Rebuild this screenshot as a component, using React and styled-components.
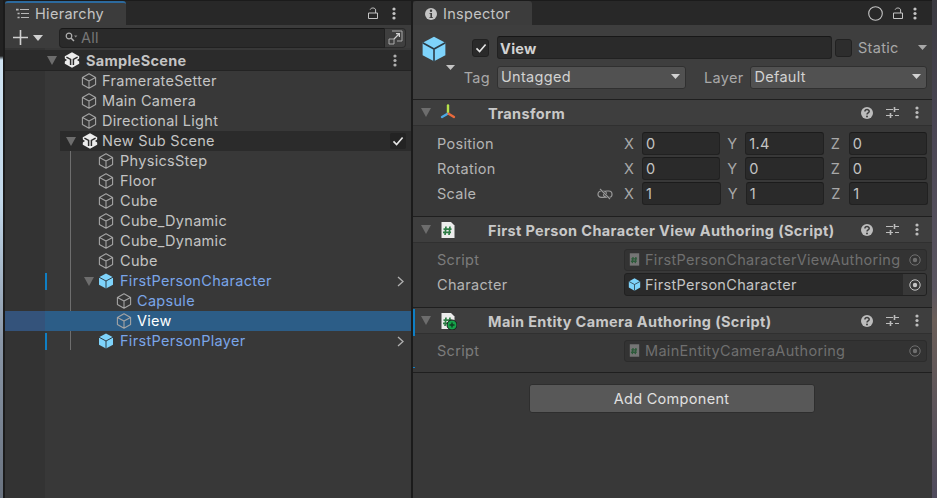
import React from "react";
import styled, { createGlobalStyle } from "styled-components";

const Global = createGlobalStyle`
  html, body { margin: 0; padding: 0; background: #1b1b1b; }
  * { box-sizing: border-box; }
`;

const Page = styled.div`
  width: 937px; height: 498px; overflow: hidden; display: flex; background: #1b1b1b;
  font-family: Inter, "Noto Sans", sans-serif; font-size: 14.5px; letter-spacing: .3px; color: #c4c4c4;
`;
const LeftEdge = styled.div`
  width: 3px; flex: none;
  background: linear-gradient(180deg, #222 0, #222 56px, #cfe3f2 60px, #c2d8ea 200px, #8a97a8 340px, #69727f 498px);
`;
const RightEdge = styled.div`
  width: 5px; flex: none;
  background: linear-gradient(180deg, #3b3a40 0, #4a4654 130px, #5a5560 290px, #6a5e58 320px, #4f4b5c 498px);
`;
const Panel = styled.section`
  display: flex; flex-direction: column; flex: none; width: ${p => p.$w}px; margin-left: ${p => p.$ml}px; background: #383838; height: 498px;
`;
const TabBar = styled.div`
  height: 25px; flex: none; display: flex; align-items: stretch; background: #282828; border-top: 1px solid #1b1b1b; padding-right: ${p => p.$pr}px;
`;
const Tab = styled.div`
  width: ${p => p.$w}px; display: flex; align-items: center; gap: 6px; padding-left: ${p => p.$pl}px; padding-top: ${p => (p.$focus ? 0 : 1)}px; padding-bottom: ${p => (p.$focus ? 1 : 0)}px;
  background: #3c3c3c; color: #c4c4c4; border-top: ${p => (p.$focus ? "2px solid #2c6a9e" : "none")}; border-radius: 3px 3px 0 0;
`;
const TabActions = styled.div`
  margin-left: auto; display: flex; align-items: center; gap: ${p => p.$gap}px; color: #c4c4c4;
`;
const Toolbar = styled.div`
  height: 23px; flex: none; background: #3c3c3c; display: flex; align-items: center; padding: 2px 5px 0 8px; color: #d0d0d0;
`;
const PlusButton = styled.div`
  width: 46px; flex: none; display: flex; align-items: center; gap: 5px;
`;
const SearchBox = styled.div`
  flex: 1; height: 20px; display: flex; align-items: center; gap: 3px; padding-left: 5px; background: #2a2a2a; border: 1px solid #212121; border-top-color: #171717; border-radius: 4px 0 0 4px; color: #777;
`;
const ExpandButton = styled.div`
  width: 21px; height: 20px; flex: none; display: flex; align-items: center; justify-content: center; background: #3f3f3f; border: 1px solid #2a2a2a; border-left: none; border-radius: 0 4px 4px 0; color: #aaa;
`;
const Tree = styled.div`
  position: relative; flex: 1; padding-top: 2px;
  background: linear-gradient(90deg, #333 40px, #383838 40px);
`;
const TreeLine = styled.div`
  position: absolute; left: 65px; top: 103px; width: 1px; height: 199px; background: #6e6e6e;
`;
const Row = styled.div`
  position: relative; height: 20px; display: flex; align-items: center; padding-left: ${p => p.$indent}px; padding-right: 5px;
  color: ${p => (p.$selected ? "#fff" : p.$prefab ? "#7aa5e8" : "#c4c4c4")};
  background: ${p => (p.$selected ? "linear-gradient(90deg, #34537b 40px, #2c5d87 40px)" : "transparent")};
`;
const RowLabel = styled.span`
  margin-bottom: 2px;
`;
const SceneRow = styled(Row)`
  height: 21px; font-weight: 700; background: #2b2b2b; border-bottom: 1px solid #232323;
`;
const SceneLabel = styled.span`
  margin-top: 1px;
`;
const SubSceneRow = styled(Row)`
  margin-left: 55px; padding-left: 0; background: #2b2b2b;
`;
const ArrowSlot = styled.div`
  width: ${p => p.$w ?? 18}px; flex: none; display: flex; align-items: center; padding-left: ${p => p.$pl ?? 1}px; color: #6d6d6d;
`;
const IconSlot = styled.div`
  width: 16px; height: 16px; flex: none; margin-right: ${p => p.$mr ?? 5}px; display: flex;
`;
const Trailing = styled.div`
  margin-left: auto; padding-right: ${p => p.$pr ?? 0}px; display: flex; align-items: center; color: #b0b0b0;
`;
const ModifiedBar = styled.div`
  position: absolute; left: 40px; top: 2px; width: 2px; height: 17px; background: #0f7fc4;
`;
const CheckCell = styled.div`
  width: 16px; height: 16px; display: flex; align-items: center; justify-content: center; background: #232323; border-radius: 2px; color: #e6e6e6;
`;

const ObjectHeader = styled.div`
  height: 75px; flex: none; background: #3e3e3e; border-bottom: 1px solid #1f1f1f; padding: 11px 5px 0 0;
  display: grid; grid-template-columns: 84px 1fr; grid-template-rows: 23px 23px; row-gap: 7px;
`;
const HeaderLead = styled.div`
  position: relative; display: flex; align-items: flex-start; padding-left: 8px;
`;
const CaretBadge = styled.div`
  position: absolute; left: 33px; top: 29px; color: #c4c4c4; display: flex;
`;
const Toggle = styled.div`
  width: 17px; height: 18px; margin: 3px 0 0 25px; display: flex; align-items: center; justify-content: center; background: #2a2a2a; border: 1px solid #212121; border-radius: 3px; color: #e6e6e6;
`;
const NameRow = styled.div`
  display: flex; align-items: center;
`;
const NameField = styled.div`
  flex: 1; height: 23px; display: flex; align-items: center; padding: 2px 0 0 2px; background: #2a2a2a; border: 1px solid #212121; border-top-color: #171717; border-radius: 3px; color: #d2d2d2; font-weight: 700;
`;
const StaticBox = styled.div`
  width: 17px; height: 18px; margin-left: 3px; flex: none; background: #2d2d2d; border: 1px solid #212121; border-radius: 3px;
`;
const StaticLabel = styled.div`
  margin-left: 6px; width: 69px; flex: none; display: flex; align-items: center; justify-content: space-between; padding-right: 0; color: #a8a8a8;
`;
const TagLabel = styled.div`
  display: flex; justify-content: flex-end; align-items: center; padding-right: 7px; color: #a8a8a8;
`;
const TagRow = styled.div`
  display: flex; align-items: center;
`;
const Dropdown = styled.div`
  flex: ${p => (p.$w ? "none" : 1)}; width: ${p => p.$w}px; height: 23px; display: flex; align-items: center; justify-content: space-between; padding: 0 5px 2px 3px; background: #515151; border: 1px solid #303030; border-radius: 3px; color: #d2d2d2;
`;
const LayerLabel = styled.div`
  margin: 0 7px 0 18px; color: #a8a8a8;
`;
const Section = styled.div`
  position: relative; flex: none; border-bottom: 1px solid #1f1f1f;
`;
const SectionHeader = styled.div`
  height: 26px; display: flex; align-items: center; padding: 0 13px 0 8px; background: #3e3e3e; border-bottom: 1px solid #303030; color: #c8c8c8; font-weight: 700;
`;
const TitleIcon = styled.div`
  width: 18px; height: 18px; margin-right: 31px; display: flex; flex: none;
`;
const SectionTitle = styled.span`
  margin-top: 2px; letter-spacing: .37px;
`;
const SectionTools = styled.div`
  margin-left: auto; display: flex; align-items: center; gap: 13px; color: #bdbdbd;
`;
const SpacedDots = styled.div`
  margin-left: 3px; display: flex;
`;
const SectionBody = styled.div`
  padding: ${p => p.$top}px 5px ${p => p.$bottom}px 24px; display: flex; flex-direction: column; gap: ${p => p.$gap ?? 2}px;
`;
const PropRow = styled.div`
  height: 23px; display: grid; grid-template-columns: 187px 1fr; align-items: center; color: ${p => (p.$dim ? "#7c7c7c" : "#b4b4b4")};
`;
const LabelCell = styled.div`
  display: flex; align-items: center; justify-content: space-between; padding-right: 11px;
`;
const Vector = styled.div`
  display: grid; grid-template-columns: repeat(3, 1fr); column-gap: 7px; margin-right: ${p => (p.$shift ? -1 : 0)}px;
`;
const Axis = styled.div`
  display: grid; grid-template-columns: 18px 1fr; align-items: center; color: #a8a8a8;
`;
const NumField = styled.div`
  height: 23px; display: flex; align-items: center; padding-left: 3px; background: #2a2a2a; border: 1px solid #212121; border-top-color: #1b1b1b; border-radius: 3px; color: #c4c4c4;
`;
const ObjectField = styled.div`
  height: ${p => (p.$dim ? 22 : 23)}px; display: flex; align-items: center; padding-left: 3px; background: ${p => (p.$dim ? "#333333" : "#2a2a2a")}; border: 1px solid ${p => (p.$dim ? "#2c2c2c" : "#212121")}; border-radius: 3px; color: ${p => (p.$dim ? "#6f6f6f" : "#c4c4c4")}; overflow: hidden; white-space: nowrap;
`;
const FieldText = styled.span`
  flex: 1; min-width: 0; overflow: hidden; margin-left: 4px;
`;
const PickerCell = styled.div`
  width: 23px; align-self: stretch; flex: none; display: flex; align-items: center; justify-content: center; color: ${p => (p.$dim ? "#6f6f6f" : "#c4c4c4")}; background: ${p => (p.$dim ? "transparent" : "#383838")};
`;
const ChangedTick = styled.div`
  position: absolute; left: 0; top: ${p => p.$top}px; width: 2px; height: ${p => p.$h}px; background: #0f7fc4;
`;
const Footer = styled.div`
  display: flex; justify-content: center; padding: 11px 2px 0 0;
`;
const AddButton = styled.div`
  width: 286px; height: 29px; display: flex; align-items: center; justify-content: center; background: #585858; border: 1px solid #2e2e2e; border-radius: 3px; color: #e0e0e0;
`;

const Svg = ({ s = 16, h, children, vb }) => (
  <svg width={s} height={h ?? s} viewBox={vb ?? `0 0 ${s} ${h ?? s}`} fill="none" style={{ display: "block", flex: "none" }}>{children}</svg>
);
const Cube = () => (
  <Svg s={16} vb="0 0 16 16">
    <path d="M8 .8 14.6 4.4V11.6L8 15.2 1.4 11.6V4.4ZM1.4 4.4 8 8 14.6 4.4M8 8V15.2" stroke="#a4a4a4" strokeWidth="1.1" strokeLinejoin="round" />
  </Svg>
);
const BlueCube = ({ s = 16 }) => (
  <Svg s={s} vb="0 0 16 16">
    <path d="M8 .4 15 4.2V11.8L8 15.6 1 11.8V4.2Z" fill="#7ed3fb" />
    <path d="M1 4.2 8 8 15 4.2M8 8V15.6" stroke="#2d3c46" strokeWidth="1" />
  </Svg>
);
const UnityLogo = () => (
  <Svg s={16} vb="0 0 16 16">
    <path d="M8 .2 15.2 4.2V11.8L8 15.8 .8 11.8V4.2Z" fill="#ececec" />
    <path d="M2.4 5.2 6.6 7.4V13M13.6 5.2 9.4 7.4V13" stroke="#2b2b2b" strokeWidth="1.5" />
    <path d="M0 6 3 8 0 10ZM16 6 13 8 16 10Z" fill="#2b2b2b" />
  </Svg>
);
const Tri = ({ dir = "down", w = 10, h = 9 }) => (
  <Svg s={w} h={h}>
    <path d={dir === "down" ? `M0 0H${w}L${w / 2} ${h}Z` : `M0 0L${w} ${h / 2}L0 ${h}Z`} fill="currentColor" />
  </Svg>
);
const Dots = () => (
  <Svg s={4} h={13}>
    <circle cx="2" cy="2" r="1.6" fill="currentColor" /><circle cx="2" cy="6.5" r="1.6" fill="currentColor" /><circle cx="2" cy="11" r="1.6" fill="currentColor" />
  </Svg>
);
const Lock = () => (
  <Svg s={10} h={12}>
    <path d="M.5 6H9.5V11.5H.5Z" stroke="currentColor" strokeWidth="1" />
    <path d="M2.2 2.6C2.8.4 7.6.4 7.6 3V6" stroke="currentColor" strokeWidth="1" />
  </Svg>
);
const ListIcon = () => (
  <Svg s={13} h={11}>
    <path d="M4 1.5H13M5 5.5H13M5 9.5H13" stroke="#b8b8b8" strokeWidth="1" />
    <path d="M0 .7H2.6V2.4H0ZM1.5 4.7H3.6V6.3H1.5ZM1.5 8.7H3.6V10.3H1.5Z" fill="#b8b8b8" />
  </Svg>
);
const InfoIcon = () => (
  <Svg s={12}>
    <circle cx="6" cy="6" r="6" fill="#c4c4c4" />
    <circle cx="6" cy="2.8" r="1.2" fill="#3c3c3c" />
    <path d="M4.4 5H7V9.2H8V10H4.4V9.2H5.4V5.8H4.4Z" fill="#3c3c3c" />
  </Svg>
);
const Plus = () => (
  <Svg s={15}><path d="M7.5 0V15M0 7.5H15" stroke="currentColor" strokeWidth="1.6" /></Svg>
);
const SearchIcon = () => (
  <Svg s={13} h={11}>
    <circle cx="4" cy="4" r="2.8" stroke="#b0b0b0" strokeWidth="1.2" />
    <path d="M6 6 9 9" stroke="#b0b0b0" strokeWidth="1.5" /><path d="M9 3.4H12.4L10.7 5.6Z" fill="#8a8a8a" />
  </Svg>
);
const ExpandIcon = () => (
  <Svg s={15}>
    <path d="M4 1H14V11H9" stroke="currentColor" strokeWidth="1" />
    <path d="M1 9H6V14H1Z" stroke="currentColor" strokeWidth="1" />
    <path d="M6 9 11 4M8 3.6H11.4V7" stroke="#d0d0d0" strokeWidth="1.2" />
  </Svg>
);
const Check = ({ s = 12 }) => (
  <Svg s={s} vb="0 0 12 12"><path d="M1.5 6.4 4.6 9.6 10.6 2.4" stroke="currentColor" strokeWidth="1.6" /></Svg>
);
const Chevron = () => (
  <Svg s={7} h={11}><path d="M1 1 6 5.5 1 10" stroke="currentColor" strokeWidth="1.3" /></Svg>
);
const TransformIcon = () => (
  <Svg s={18}>
    <path d="M9 1.5V8.5" stroke="#b6e24a" strokeWidth="2.4" strokeLinecap="round" />
    <path d="M8.6 9.8 3 13" stroke="#4aa8e4" strokeWidth="2.4" strokeLinecap="round" />
    <path d="M9.6 9.8 15 13" stroke="#ea6a3c" strokeWidth="2.4" strokeLinecap="round" />
  </Svg>
);
const Hash = ({ stroke, sw = 1.4 }) => (
  <path d="M7 5.5 6 14M11 5.5 10 14M4.5 8.2H12.5M4 11.4H12" stroke={stroke} strokeWidth={sw} />
);
const ScriptIcon = ({ add }) => (
  <Svg s={18}>
    <path d="M2.5 1H12L15.5 4.5V17H2.5Z" fill="#ececec" />
    <Hash stroke="#2f7d46" sw={1.7} />
    {add && <>
      <circle cx="13" cy="13" r="5" fill="#16a34a" stroke="#1c1c1c" strokeWidth="1" />
      <path d="M13 10.5V15.5M10.5 13H15.5" stroke="#0e3d20" strokeWidth="1.4" />
    </>}
  </Svg>
);
const SmallScript = () => (
  <Svg s={13} vb="0 0 18 18">
    <path d="M2.5 .5H15.5V17.5H2.5Z" fill="#757575" />
    <Hash stroke="#2d5a3a" sw={1.9} />
  </Svg>
);
const HelpIcon = () => (
  <Svg s={12}>
    <circle cx="6" cy="6" r="6" fill="currentColor" />
    <path d="M3.9 4.5C4 2 8.2 2 8.2 4.4 8.2 5.9 6 5.7 6 7.4" stroke="#3e3e3e" strokeWidth="1.5" />
    <circle cx="6" cy="9.5" r="1" fill="#3e3e3e" />
  </Svg>
);
const Presets = () => (
  <Svg s={13}>
    <path d="M0 3.5H13M0 9.5H13" stroke="currentColor" strokeWidth="1.1" strokeDasharray="7 2 4" />
    <path d="M8.5 1V6M4.5 7V12" stroke="currentColor" strokeWidth="1.6" />
  </Svg>
);
const Target = () => (
  <Svg s={12}>
    <circle cx="6" cy="6" r="5.2" stroke="currentColor" strokeWidth="1" />
    <circle cx="6" cy="6" r="2.2" fill="currentColor" />
  </Svg>
);
const Ring = () => (
  <Svg s={15}><circle cx="7.5" cy="7.5" r="6.8" stroke="#c4c4c4" strokeWidth="1.1" /></Svg>
);
const LinkOff = () => (
  <Svg s={16} h={12}>
    <rect x="1" y="3" width="8.5" height="6.4" rx="3.2" stroke="#9a9a9a" strokeWidth="1.2" />
    <rect x="6.5" y="3" width="8.5" height="6.4" rx="3.2" stroke="#9a9a9a" strokeWidth="1.2" />
    <path d="M3 1 13 11" stroke="#383838" strokeWidth="2.4" />
    <path d="M3 1 13 11" stroke="#9a9a9a" strokeWidth="1.1" />
  </Svg>
);

const SectionHead = ({ icon, title }) => (
  <SectionHeader>
    <ArrowSlot $pl={0}><Tri /></ArrowSlot>
    <TitleIcon>{icon}</TitleIcon>
    <SectionTitle>{title}</SectionTitle>
    <SectionTools><HelpIcon /><Presets /><SpacedDots><Dots /></SpacedDots></SectionTools>
  </SectionHeader>
);

const plain = ["PhysicsStep", "Floor", "Cube", "Cube_Dynamic", "Cube_Dynamic", "Cube"];

const VecRow = ({ label, values, trailing, shift }) => (
  <PropRow>
    <LabelCell>{label}{trailing}</LabelCell>
    <Vector $shift={shift}>
      {["X", "Y", "Z"].map((a, i) => (
        <Axis key={a}><span>{a}</span><NumField>{values[i]}</NumField></Axis>
      ))}
    </Vector>
  </PropRow>
);

export default function App() {
  return (
    <Page>
      <Global />
      <LeftEdge />
      <Panel $w={406} $ml={2}>
        <TabBar $pr={15}>
          <Tab $w={121} $pl={11} $focus><ListIcon />Hierarchy</Tab>
          <TabActions $gap={14}><Lock /><Dots /></TabActions>
        </TabBar>
        <Toolbar>
          <PlusButton><Plus /><Tri w={10} h={6} /></PlusButton>
          <SearchBox><SearchIcon />All</SearchBox>
          <ExpandButton><ExpandIcon /></ExpandButton>
        </Toolbar>
        <Tree>
          <TreeLine />
          <SceneRow $indent={41}>
            <ArrowSlot><Tri /></ArrowSlot>
            <IconSlot $mr={6}><UnityLogo /></IconSlot>
            <SceneLabel>SampleScene</SceneLabel>
            <Trailing $pr={9}><Dots /></Trailing>
          </SceneRow>
          {["FramerateSetter", "Main Camera", "Directional Light"].map(n => (
            <Row key={n} $indent={76}><IconSlot><Cube /></IconSlot><RowLabel>{n}</RowLabel></Row>
          ))}
          <SubSceneRow>
            <ArrowSlot $pl={6} $w={22}><Tri /></ArrowSlot>
            <IconSlot $mr={4}><UnityLogo /></IconSlot>
            <RowLabel>New Sub Scene</RowLabel>
            <Trailing><CheckCell><Check /></CheckCell></Trailing>
          </SubSceneRow>
          {plain.map((n, i) => (
            <Row key={i} $indent={93}><IconSlot $mr={6}><Cube /></IconSlot><RowLabel>{n}</RowLabel></Row>
          ))}
          <Row $prefab $indent={75}>
            <ModifiedBar />
            <ArrowSlot $pl={4}><Tri /></ArrowSlot>
            <IconSlot $mr={6}><BlueCube /></IconSlot>
            <RowLabel>FirstPersonCharacter</RowLabel>
            <Trailing $pr={2}><Chevron /></Trailing>
          </Row>
          <Row $prefab $indent={111}><IconSlot><Cube /></IconSlot><RowLabel>Capsule</RowLabel></Row>
          <Row $selected $indent={111}><IconSlot><Cube /></IconSlot><RowLabel>View</RowLabel></Row>
          <Row $prefab $indent={93}>
            <ModifiedBar />
            <IconSlot $mr={6}><BlueCube /></IconSlot>
            <RowLabel>FirstPersonPlayer</RowLabel>
            <Trailing $pr={2}><Chevron /></Trailing>
          </Row>
        </Tree>
      </Panel>
      <Panel $w={519} $ml={2}>
        <TabBar $pr={15}>
          <Tab $w={119} $pl={12}><InfoIcon />Inspector</Tab>
          <TabActions $gap={10}><Ring /><Lock /><Dots /></TabActions>
        </TabBar>
        <ObjectHeader>
          <HeaderLead>
            <BlueCube s={26} />
            <CaretBadge><Tri w={9} h={5} /></CaretBadge>
            <Toggle><Check /></Toggle>
          </HeaderLead>
          <NameRow>
            <NameField>View</NameField>
            <StaticBox />
            <StaticLabel>Static <Tri w={9} h={5} /></StaticLabel>
          </NameRow>
          <TagLabel>Tag</TagLabel>
          <TagRow>
            <Dropdown $w={189}>Untagged<Tri w={9} h={5} /></Dropdown>
            <LayerLabel>Layer</LayerLabel>
            <Dropdown>Default<Tri w={9} h={5} /></Dropdown>
          </TagRow>
        </ObjectHeader>
        <Section>
          <SectionHead icon={<TransformIcon />} title="Transform" />
          <SectionBody $top={6} $bottom={11}>
            <VecRow label="Position" values={["0", "1.4", "0"]} />
            <VecRow label="Rotation" values={["0", "0", "0"]} />
            <VecRow label="Scale" values={["1", "1", "1"]} trailing={<LinkOff />} shift />
          </SectionBody>
        </Section>
        <Section>
          <SectionHead icon={<ScriptIcon />} title="First Person Character View Authoring (Script)" />
          <SectionBody $top={5} $bottom={11} $gap={2}>
            <PropRow $dim>
              Script
              <ObjectField $dim><SmallScript /><FieldText>FirstPersonCharacterViewAuthoring</FieldText><PickerCell $dim><Target /></PickerCell></ObjectField>
            </PropRow>
            <PropRow>
              Character
              <ObjectField><BlueCube s={13} /><FieldText>FirstPersonCharacter</FieldText><PickerCell><Target /></PickerCell></ObjectField>
            </PropRow>
          </SectionBody>
        </Section>
        <Section>
          <ChangedTick $top={1} $h={27} />
          <ChangedTick $top={59} $h={1} />
          <SectionHead icon={<ScriptIcon add />} title="Main Entity Camera Authoring (Script)" />
          <SectionBody $top={5} $bottom={10}>
            <PropRow $dim>
              Script
              <ObjectField $dim><SmallScript /><FieldText>MainEntityCameraAuthoring</FieldText><PickerCell $dim><Target /></PickerCell></ObjectField>
            </PropRow>
          </SectionBody>
        </Section>
        <Footer><AddButton>Add Component</AddButton></Footer>
      </Panel>
      <RightEdge />
    </Page>
  );
}
